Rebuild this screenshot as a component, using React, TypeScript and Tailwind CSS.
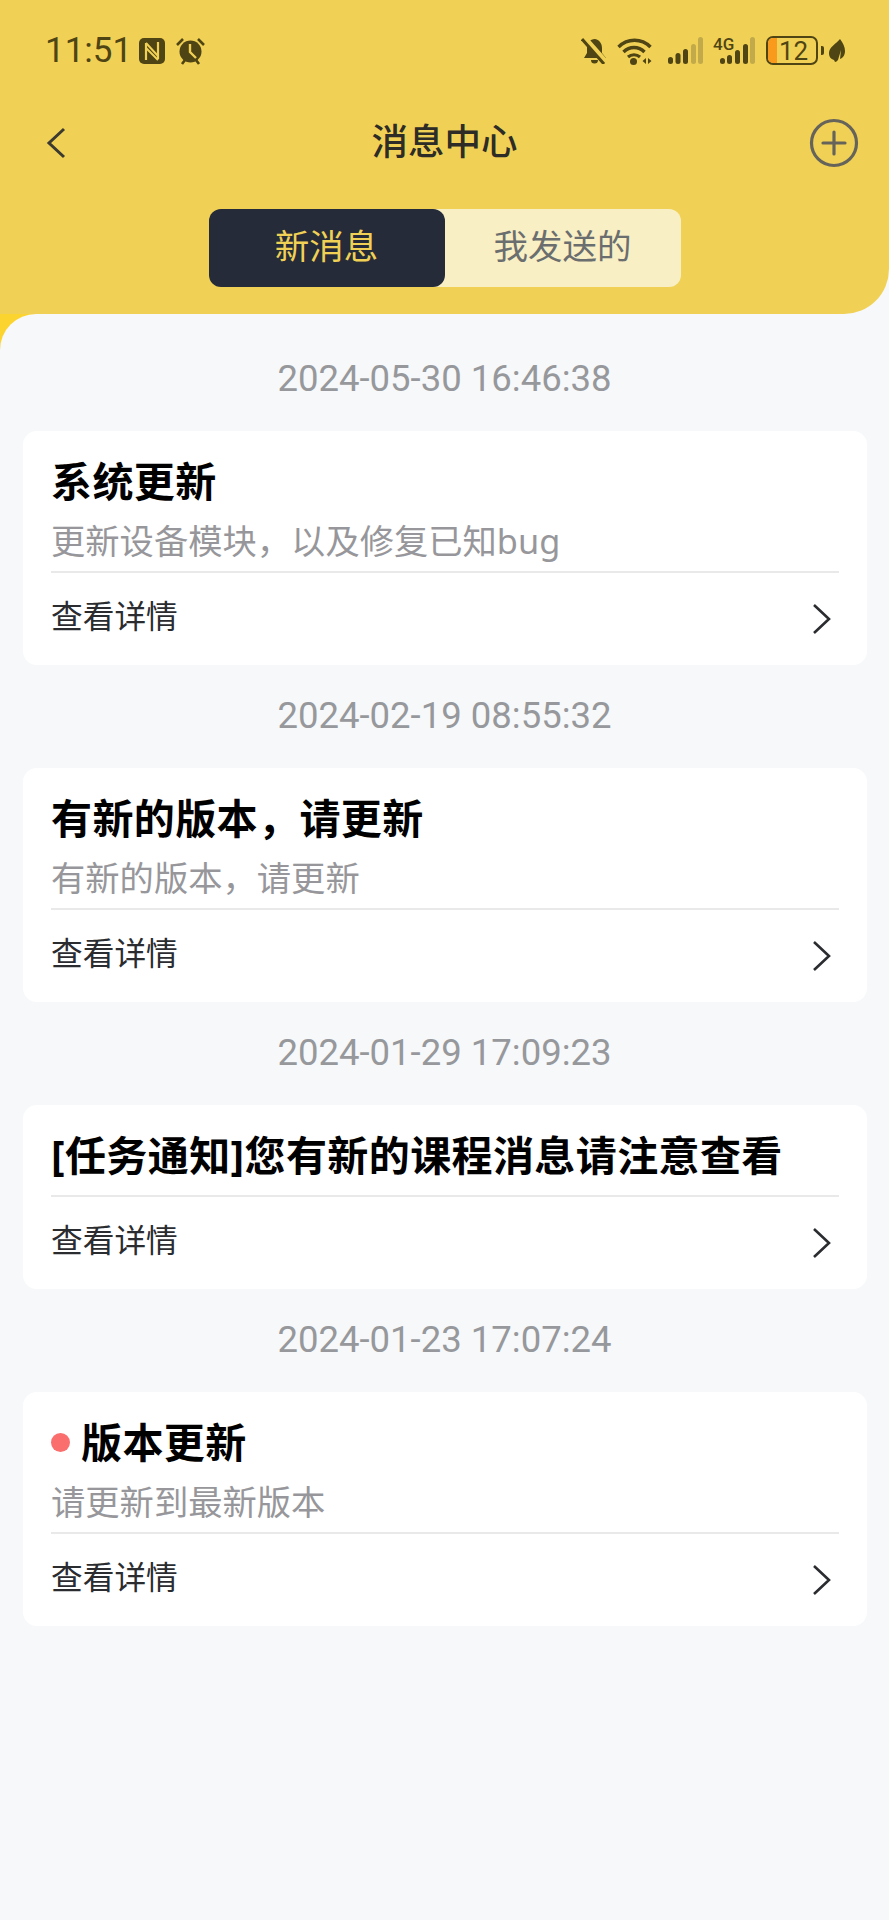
import React from 'react';

const CJK = "font-['Roboto','Noto_Sans_CJK_SC',sans-serif]";
const CJK_WIDE = "font-['Noto_Sans','Noto_Sans_CJK_SC',sans-serif]";

interface Message {
  date: string;
  title: string;
  desc?: string;
  unread?: boolean;
}

const messages: Message[] = [
  { date: '2024-05-30 16:46:38', title: '系统更新', desc: '更新设备模块，以及修复已知bug' },
  { date: '2024-02-19 08:55:32', title: '有新的版本，请更新', desc: '有新的版本，请更新' },
  { date: '2024-01-29 17:09:23', title: '[任务通知]您有新的课程消息请注意查看' },
  { date: '2024-01-23 17:07:24', title: '版本更新', desc: '请更新到最新版本', unread: true },
];

function StatusBar() {
  return (
    <div className="flex h-[101px] items-start justify-between pl-[45px] pr-[44px] pt-[36px] text-[#4f4414]">
      <div className="flex h-[29px] items-center">
        <span className="text-[35px] leading-[29px] font-['Roboto',sans-serif]">11:51</span>
        <svg className="ml-[7px]" width="26" height="26" viewBox="0 0 26 26">
          <rect width="26" height="26" rx="5" fill="currentColor" />
          <path d="M7 5v17M19 4v17" stroke="#f0d155" strokeWidth="2.2" />
          <path d="M7 5l12 13M7 10l12 12" stroke="#f0d155" strokeWidth="2" />
        </svg>
        <svg className="ml-[11px]" width="29" height="28" viewBox="0 0 29 28">
          <path d="M1 8l6-6M28 8l-6-6M6 27l3-4M23 27l-3-4" stroke="currentColor" strokeWidth="2.6" />
          <circle cx="14.5" cy="14.5" r="11" fill="currentColor" />
          <path d="M14 7v8l6 6" fill="none" stroke="#f0d155" strokeWidth="2.4" />
        </svg>
      </div>
      <div className="flex h-[29px] items-center">
        <svg width="26" height="27" viewBox="0 0 26 27">
          <path d="M14 2c5 1 7 5 7 9v5l4 5H3l3-5v-6c0-4 3-8 8-8zM10 23h7a3.5 3.5 0 0 1-7 0z" fill="currentColor" />
          <path d="M3 0l22 25" stroke="#f0d155" strokeWidth="5" />
          <path d="M1 2l22 25" stroke="currentColor" strokeWidth="3" />
        </svg>
        <svg className="ml-[10px]" width="36" height="28" viewBox="0 0 36 28">
          <path d="M1.5 10c9-9 23-9 32 0" fill="none" stroke="currentColor" strokeWidth="3.4" />
          <path d="M6.5 15c6-6 15-6 21 0" fill="none" stroke="currentColor" strokeWidth="3.4" />
          <path d="M11 20c3.5-3 8.5-3 12 0" fill="none" stroke="currentColor" strokeWidth="3.2" />
          <circle cx="16.5" cy="24.5" r="3.5" fill="currentColor" />
          <path d="M29 21v6l-3.5-3zM31 21v6l3.5-3z" fill="currentColor" />
        </svg>
        <svg className="ml-[15px]" width="35" height="27" viewBox="0 0 35 27">
          <rect x="0" y="20" width="5" height="7" rx="2.5" fill="currentColor" />
          <rect x="7.5" y="16" width="5" height="11" rx="2.5" fill="currentColor" />
          <rect x="15" y="12" width="5" height="15" rx="2.5" fill="currentColor" />
          <rect x="23" y="7" width="5" height="20" rx="2.5" fill="#c2aa4a" />
          <rect x="30" y="0" width="5" height="27" rx="2.5" fill="#c2aa4a" />
        </svg>
        <div className="relative ml-[10px] h-[27px] w-[42px]">
          <span className="absolute left-0 top-0 text-[17px] leading-[14px] font-medium font-['Roboto',sans-serif]">4G</span>
          <svg className="absolute inset-0" width="42" height="27" viewBox="0 0 42 27">
            <rect x="7" y="21" width="5" height="6" rx="2.5" fill="currentColor" />
            <rect x="14" y="18" width="5" height="9" rx="2.5" fill="currentColor" />
            <rect x="22" y="13" width="5" height="14" rx="2.5" fill="currentColor" />
            <rect x="30" y="7" width="5" height="20" rx="2.5" fill="currentColor" />
            <rect x="37" y="0" width="5" height="27" rx="2.5" fill="#c2aa4a" />
          </svg>
        </div>
        <div className="relative ml-[11px] flex h-[29px] w-[52px] items-center justify-center overflow-hidden rounded-[7px] border-2 border-[#4f4414]">
          <div className="absolute inset-y-0 left-0 w-[9px] bg-[#f99a1c]" />
          <span className="relative pl-[3px] text-[26px] leading-none font-['Roboto',sans-serif]">12</span>
        </div>
        <div className="ml-[3px] h-[9px] w-[3px] rounded-r-[2px] bg-[#4f4414]" />
        <svg className="ml-[5px]" width="16" height="23" viewBox="0 0 16 23">
          <path d="M11 0c3 4 5 8 5 12 0 4-2 7-5 8l1-9-3 10c-1 1-2 2-3 2l-1-2c-3-1-5-3-5-7C0 8 7 5 11 0z" fill="currentColor" />
        </svg>
      </div>
    </div>
  );
}

function NavBar() {
  return (
    <div className="relative flex h-[84px] items-center justify-center">
      <svg className="absolute left-[45px] top-[26px]" width="22" height="32" viewBox="0 0 22 32">
        <path d="M19 2L4 16l15 14" fill="none" stroke="#3c3a30" strokeWidth="3" />
      </svg>
      <h1 className={`text-[36.5px] leading-none font-medium text-[#2d2c26] ${CJK}`}>消息中心</h1>
      <svg className="absolute right-[30px] top-[17px]" width="50" height="50" viewBox="0 0 50 50">
        <circle cx="25" cy="25" r="22.5" fill="none" stroke="#66645a" strokeWidth="3.2" />
        <path d="M25 14v22M14 25h22" stroke="#66645a" strokeWidth="3.2" strokeLinecap="round" />
      </svg>
    </div>
  );
}

function Tabs() {
  return (
    <div className="mt-[24px] flex justify-center">
      <div className="flex h-[78px] w-[472px]">
        <div className={`relative z-10 flex w-[236px] items-center justify-center rounded-[12px] bg-[#252b38] text-[34.5px] text-[#f0d155] ${CJK}`}>
          新消息
        </div>
        <div className={`-ml-[12px] flex flex-1 items-center justify-center rounded-r-[12px] bg-[#f9efc5] pl-[12px] text-[34.5px] text-[#6b6e6e] ${CJK}`}>
          我发送的
        </div>
      </div>
    </div>
  );
}

function MessageCard({ title, desc, unread }: Message) {
  return (
    <div className={`ml-[23px] mr-[22px] rounded-[14px] bg-white ${CJK}`}>
      <div className="mx-[28px] border-b-2 border-[#e9e9e9]">
        <div className={`pt-[25px] ${desc ? 'pb-[9px]' : 'pb-[15.5px]'}`}>
          <div className="flex h-[50px] items-center">
            {unread && <span className="mr-[11px] h-[19px] w-[19px] rounded-full bg-[#fa6e6e]" />}
            <span className={`text-[41px] leading-[50px] font-bold tracking-[0.4px] text-black ${CJK_WIDE}`}>{title}</span>
          </div>
          {desc && <p className={`mt-[14px] text-[34.3px] leading-[42px] text-[#97979b] ${CJK_WIDE}`}>{desc}</p>}
        </div>
      </div>
      <div className="flex h-[92px] items-center justify-between px-[28px]">
        <span className="-mt-[2px] text-[31.7px] text-[#2a2c30]">查看详情</span>
        <svg className="mr-[7.5px]" width="22" height="32" viewBox="0 0 22 32">
          <path d="M4 2l15 14L4 30" fill="none" stroke="#2a2c30" strokeWidth="2.6" />
        </svg>
      </div>
    </div>
  );
}

export default function App() {
  return (
    <div className="flex min-h-screen flex-col bg-[#f6f8fa]">
      <header className="h-[314px] shrink-0 rounded-br-[45px] bg-[#f0d155]">
        <StatusBar />
        <NavBar />
        <Tabs />
      </header>
      <div className="flex flex-1 flex-col bg-[linear-gradient(to_right,#fcd42f_40px,#f6f8fa_40px)]">
        <main className="flex-1 rounded-tl-[36px] bg-[#f6f8fa] pt-[14.5px]">
          {messages.map((m) => (
            <section key={m.date}>
              <p className="mt-[28.75px] mb-[30px] text-center text-[36.5px] leading-[44px] text-[#97989c] font-['Roboto',sans-serif]">
                {m.date}
              </p>
              <MessageCard {...m} />
            </section>
          ))}
        </main>
      </div>
    </div>
  );
}
